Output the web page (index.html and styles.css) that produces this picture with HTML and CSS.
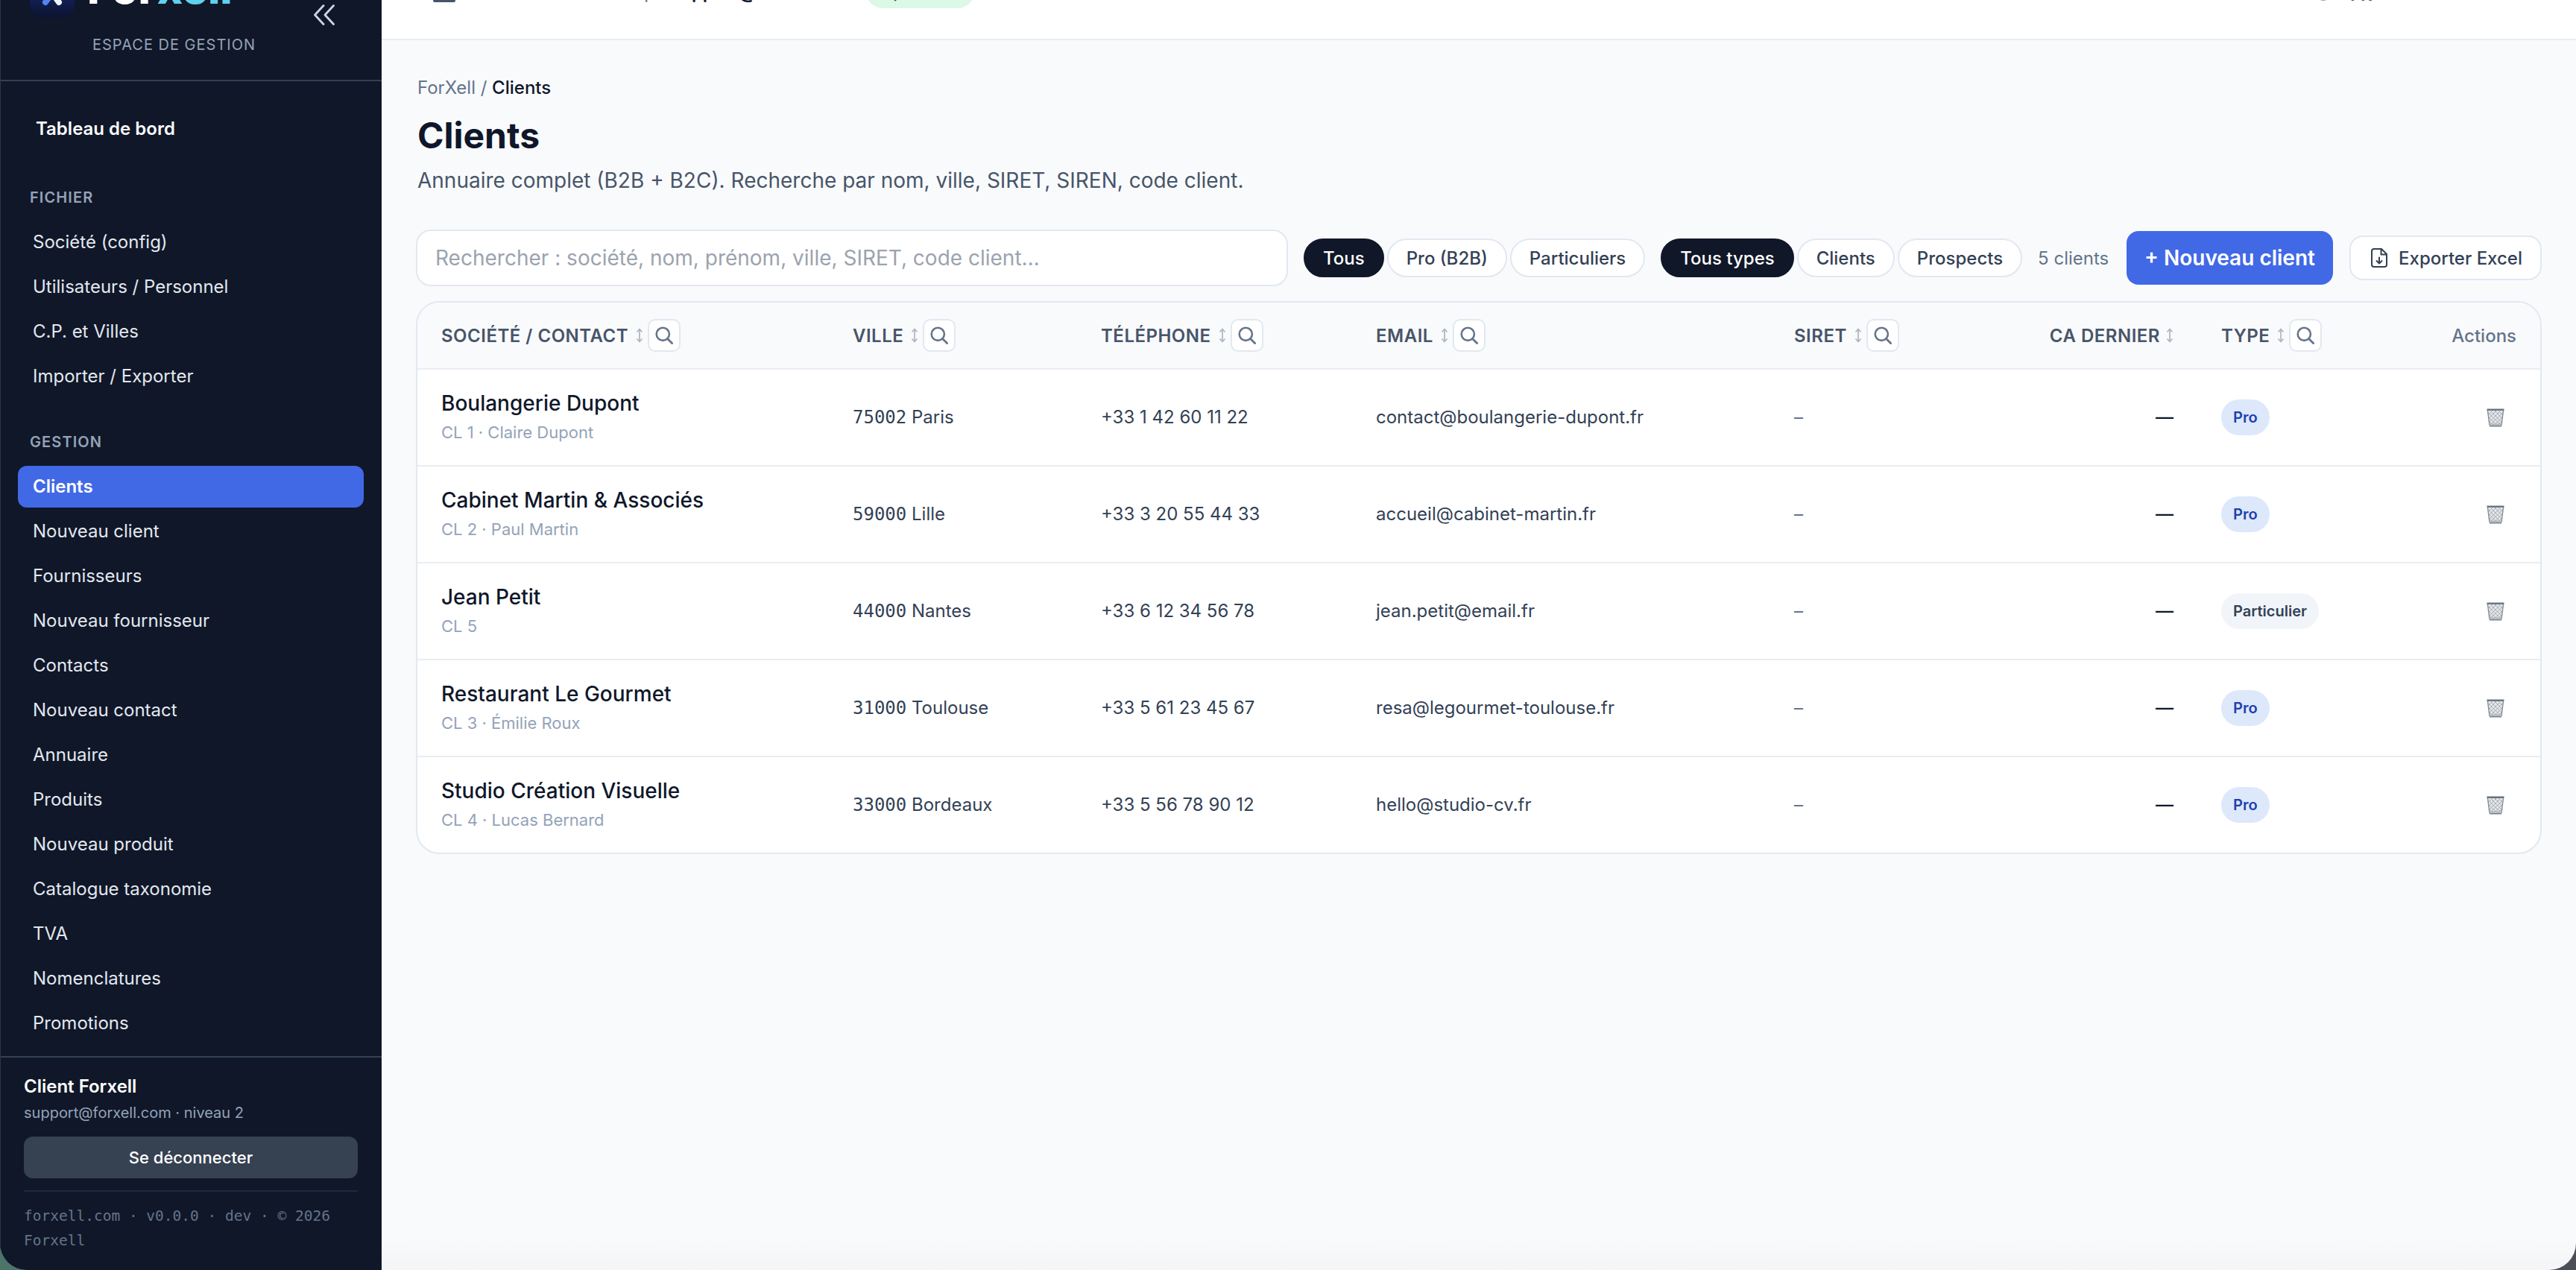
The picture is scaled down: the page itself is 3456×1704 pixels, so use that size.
FILE: index.html
```html
<!DOCTYPE html>
<html lang="fr">
  <head>
    <meta charset="UTF-8" />
    <meta name="viewport" content="width=device-width, initial-scale=1.0" />
    <title>ForXell - Clients</title>
    <link rel="stylesheet" href="styles.css">
  </head>
  <body>
    <!-- Icônes partagées -->
    <svg width="0" height="0" class="sprite">
      <symbol id="i-sort" viewBox="0 0 10 20">
        <path d="M5 2V18M1.5 5.5L5 1.5L8.5 5.5M1.5 14.5L5 18.5L8.5 14.5" fill="none" stroke="currentColor" stroke-width="1.8" />
      </symbol>
      <symbol id="i-search" viewBox="0 0 24 24">
        <circle cx="10.3" cy="10.3" r="8.6" fill="none" stroke="currentColor" stroke-width="2.6" />
        <path d="M16.5 16.5L22.6 22.6" stroke="currentColor" stroke-width="2.8" stroke-linecap="round" />
      </symbol>
      <symbol id="i-trash" viewBox="0 0 24 25">
        <path d="M1.5 2.5L4 23H20L22.5 2.5Z" fill="#e3e7ea" />
        <path d="M3 8L8 3M3.5 13L13 3M4 18L18 4M5 22L21.5 6M10 22.5L21 12M15 23L20.5 17M21 8L16 3M20.5 13L11 3M20 18L6 4M19 22L2.5 6M14 22.5L3 12M9 23L3.5 17" stroke="#a0a6ac" stroke-width="0.9" />
        <path d="M1.5 3L4 23M22.5 3L20 23" stroke="#858c94" stroke-width="1.4" />
        <path d="M0.5 1.7H23.5" stroke="#68717a" stroke-width="2.4" />
        <path d="M4 21.5H20" stroke="#a9b5c3" stroke-width="2" />
        <path d="M4 23.7H20" stroke="#747c85" stroke-width="1.5" />
      </symbol>
    </svg>

    <div class="app">
      <aside class="sidebar">
        <div class="brand">
          <div class="brand-row">
            <svg class="brand-logo" viewBox="0 0 60 60">
              <defs>
                <linearGradient id="tile" x1="0" y1="0" x2="0" y2="1">
                  <stop offset="0" stop-color="#1b3a8a" />
                  <stop offset="0.7" stop-color="#0f1b48" />
                  <stop offset="1" stop-color="#0d1430" />
                </linearGradient>
              </defs>
              <rect width="60" height="60" rx="16" fill="url(#tile)" />
              <path d="M39 14L21 39" stroke="#4f86f2" stroke-width="8" stroke-linecap="round" />
              <path d="M21 14L39 39" stroke="#eef3fd" stroke-width="8" stroke-linecap="round" />
            </svg>
            <span class="brand-name">For<b>xell</b></span>
            <svg class="collapse" viewBox="0 0 28 28">
              <path d="M13 1.5L1.5 14L13 26.5M26.5 1.5L15 14L26.5 26.5" fill="none" stroke="currentColor" stroke-width="2.8" stroke-linecap="round" stroke-linejoin="round" />
            </svg>
          </div>
          <div class="brand-sub">ESPACE DE GESTION</div>
        </div>

        <nav class="nav">
          <a class="nav-home">Tableau de bord</a>
          <div class="nav-title">FICHIER</div>
          <a class="nav-link">Société (config)</a>
          <a class="nav-link">Utilisateurs / Personnel</a>
          <a class="nav-link">C.P. et Villes</a>
          <a class="nav-link">Importer / Exporter</a>
          <div class="nav-title">GESTION</div>
          <a class="nav-link active">Clients</a>
          <a class="nav-link">Nouveau client</a>
          <a class="nav-link">Fournisseurs</a>
          <a class="nav-link">Nouveau fournisseur</a>
          <a class="nav-link">Contacts</a>
          <a class="nav-link">Nouveau contact</a>
          <a class="nav-link">Annuaire</a>
          <a class="nav-link">Produits</a>
          <a class="nav-link">Nouveau produit</a>
          <a class="nav-link">Catalogue taxonomie</a>
          <a class="nav-link">TVA</a>
          <a class="nav-link">Nomenclatures</a>
          <a class="nav-link">Promotions</a>
        </nav>

        <div class="side-footer">
          <div class="user-name">Client Forxell</div>
          <div class="user-mail">support@forxell.com · niveau 2</div>
          <button class="logout">Se déconnecter</button>
          <div class="version">forxell.com · v0.0.0 · dev · © 2026 Forxell</div>
        </div>
      </aside>

      <main class="main">
        <header class="topbar">
          <svg class="burger" viewBox="0 0 30 28">
            <path d="M2 2H28M2 14H28M2 26H28" stroke="currentColor" stroke-width="4" stroke-linecap="round" />
          </svg>
          <span class="top-label">Groupe</span>
          <span class="top-mail">support@forxell.com</span>
          <span class="top-badge">Opérateur</span>
          <div class="top-right">
            <svg class="globe" viewBox="0 0 24 24">
              <circle cx="12" cy="12" r="10.5" fill="none" stroke="currentColor" stroke-width="2.5" />
            </svg>
            <span class="lang">FR</span>
            <span class="top-hint">Forxell</span>
          </div>
        </header>

        <section class="content">
          <div class="breadcrumb">ForXell / <span>Clients</span></div>
          <h1>Clients</h1>
          <p class="subtitle">Annuaire complet (B2B + B2C). Recherche par nom, ville, SIRET, SIREN, code client.</p>

          <div class="toolbar">
            <input class="search" type="text" placeholder="Rechercher : société, nom, prénom, ville, SIRET, code client…" />
            <div class="chips">
              <button class="chip on">Tous</button>
              <button class="chip">Pro (B2B)</button>
              <button class="chip">Particuliers</button>
            </div>
            <div class="chips">
              <button class="chip on">Tous types</button>
              <button class="chip">Clients</button>
              <button class="chip">Prospects</button>
            </div>
            <span class="count">5 clients</span>
            <button class="btn-new">+ Nouveau client</button>
            <button class="btn-export">
              <svg viewBox="0 0 22 26">
                <path d="M14 1H4Q1 1 1 4V22Q1 25 4 25H18Q21 25 21 22V8ZM13.5 1V8.5H21M11 12.5V20M7.5 17L11 20.5L14.5 17" fill="none" stroke="currentColor" stroke-width="2" stroke-linejoin="round" stroke-linecap="round" />
              </svg>
              Exporter Excel
            </button>
          </div>

          <div class="card">
            <table>
              <colgroup>
                <col class="c-name" /><col class="c-city" /><col class="c-tel" /><col class="c-mail" />
                <col class="c-siret" /><col class="c-ca" /><col class="c-type" /><col class="c-act" />
              </colgroup>
              <thead>
                <tr>
                  <th><div class="th">SOCIÉTÉ / CONTACT<svg class="sort"><use href="#i-sort" /></svg><button class="find"><svg><use href="#i-search" /></svg></button></div></th>
                  <th><div class="th">VILLE<svg class="sort"><use href="#i-sort" /></svg><button class="find"><svg><use href="#i-search" /></svg></button></div></th>
                  <th><div class="th">TÉLÉPHONE<svg class="sort"><use href="#i-sort" /></svg><button class="find"><svg><use href="#i-search" /></svg></button></div></th>
                  <th><div class="th">EMAIL<svg class="sort"><use href="#i-sort" /></svg><button class="find"><svg><use href="#i-search" /></svg></button></div></th>
                  <th><div class="th">SIRET<svg class="sort"><use href="#i-sort" /></svg><button class="find"><svg><use href="#i-search" /></svg></button></div></th>
                  <th><div class="th th-right">CA DERNIER<svg class="sort"><use href="#i-sort" /></svg></div></th>
                  <th><div class="th">TYPE<svg class="sort"><use href="#i-sort" /></svg><button class="find"><svg><use href="#i-search" /></svg></button></div></th>
                  <th class="th-actions">Actions</th>
                </tr>
              </thead>
              <tbody>
                <tr>
                  <td><div class="name">Boulangerie Dupont</div><div class="sub">CL 1 · Claire Dupont</div></td>
                  <td><span class="cp">75002</span> Paris</td>
                  <td>+33 1 42 60 11 22</td>
                  <td>contact@boulangerie-dupont.fr</td>
                  <td class="siret">–</td>
                  <td class="ca">—</td>
                  <td class="type"><span class="tag pro">Pro</span></td>
                  <td class="act"><svg class="trash"><use href="#i-trash" /></svg></td>
                </tr>
                <tr>
                  <td><div class="name">Cabinet Martin &amp; Associés</div><div class="sub">CL 2 · Paul Martin</div></td>
                  <td><span class="cp">59000</span> Lille</td>
                  <td>+33 3 20 55 44 33</td>
                  <td>accueil@cabinet-martin.fr</td>
                  <td class="siret">–</td>
                  <td class="ca">—</td>
                  <td class="type"><span class="tag pro">Pro</span></td>
                  <td class="act"><svg class="trash"><use href="#i-trash" /></svg></td>
                </tr>
                <tr>
                  <td><div class="name">Jean Petit</div><div class="sub">CL 5</div></td>
                  <td><span class="cp">44000</span> Nantes</td>
                  <td>+33 6 12 34 56 78</td>
                  <td>jean.petit@email.fr</td>
                  <td class="siret">–</td>
                  <td class="ca">—</td>
                  <td class="type"><span class="tag">Particulier</span></td>
                  <td class="act"><svg class="trash"><use href="#i-trash" /></svg></td>
                </tr>
                <tr>
                  <td><div class="name">Restaurant Le Gourmet</div><div class="sub">CL 3 · Émilie Roux</div></td>
                  <td><span class="cp">31000</span> Toulouse</td>
                  <td>+33 5 61 23 45 67</td>
                  <td>resa@legourmet-toulouse.fr</td>
                  <td class="siret">–</td>
                  <td class="ca">—</td>
                  <td class="type"><span class="tag pro">Pro</span></td>
                  <td class="act"><svg class="trash"><use href="#i-trash" /></svg></td>
                </tr>
                <tr>
                  <td><div class="name">Studio Création Visuelle</div><div class="sub">CL 4 · Lucas Bernard</div></td>
                  <td><span class="cp">33000</span> Bordeaux</td>
                  <td>+33 5 56 78 90 12</td>
                  <td>hello@studio-cv.fr</td>
                  <td class="siret">–</td>
                  <td class="ca">—</td>
                  <td class="type"><span class="tag pro">Pro</span></td>
                  <td class="act"><svg class="trash"><use href="#i-trash" /></svg></td>
                </tr>
              </tbody>
            </table>
          </div>
        </section>
      </main>
    </div>
  </body>
</html>
```
FILE: styles.css
```css
* {
  box-sizing: border-box;
}

body {
  margin: 0;
  height: 1704px;
  overflow: hidden;
  background: linear-gradient(90deg, #4d7468 0%, #5a5f5f 50%, #4b4f55 100%);
  font-family: Inter, "Liberation Sans", sans-serif;
  font-size: 24px;
  color: #334155;
}

button,
input {
  font-family: inherit;
  margin: 0;
}

.sprite {
  display: block;
}

.app {
  display: flex;
  width: 3456px;
  height: 1704px;
  overflow: hidden;
  border-radius: 0 0 36px 36px;
}

/* Barre latérale */
.sidebar {
  width: 512px;
  flex: none;
  display: flex;
  flex-direction: column;
  background: #101728;
  border-left: 1px solid #30363f;
  color: #e2e8f0;
}

.brand {
  height: 109px;
  flex: none;
  display: flex;
  flex-direction: column;
  justify-content: flex-end;
  padding-bottom: 32px;
  border-bottom: 2px solid #334155;
}

.brand-row {
  display: flex;
  align-items: center;
  padding-left: 39px;
  height: 60px;
  flex: none;
}

.brand-logo {
  width: 60px;
  height: 60px;
}

.brand-name {
  width: 300px;
  margin-bottom: 20px;
  padding-left: 17px;
  font-size: 58px;
  line-height: 60px;
  font-weight: 800;
  color: #fff;
}

.brand-name b {
  font-weight: 800;
  color: #5fd0ee;
}

.collapse {
  width: 28px;
  height: 28px;
  margin: 52px 0 0 21px;
  color: #cbd5e1;
}

.brand-sub {
  margin-top: 21px;
  padding-left: 123px;
  font-size: 20px;
  line-height: 30px;
  letter-spacing: 1px;
  color: #94a3b8;
}

.nav {
  flex: 1;
  min-height: 0;
  overflow: hidden;
  padding: 36px 24px 0 23px;
}

.nav-home {
  display: block;
  padding: 0 24px;
  font-size: 24px;
  line-height: 56px;
  font-weight: 600;
  color: #f8fafc;
}

.nav-title {
  margin: 48px 0 16px;
  padding: 0 16px;
  font-size: 20px;
  line-height: 32px;
  font-weight: 600;
  letter-spacing: 1.1px;
  color: #94a3b8;
}

.nav-link + .nav-title {
  margin-top: 44px;
}

.nav-link {
  display: block;
  height: 56px;
  margin-bottom: 4px;
  padding: 0 20px;
  border-radius: 12px;
  line-height: 56px;
  color: #e2e8f0;
}

.nav-link.active {
  background: #4169e6;
  color: #fff;
  font-weight: 600;
}

.side-footer {
  flex: none;
  height: 287px;
  padding: 23px 32px 0 31px;
  border-top: 2px solid #334155;
}

.user-name {
  line-height: 32px;
  font-weight: 600;
  color: #fff;
}

.user-mail {
  margin-top: 4px;
  font-size: 20px;
  line-height: 30px;
  color: #94a3b8;
}

.logout {
  display: block;
  width: 100%;
  height: 56px;
  margin-top: 17px;
  border: 0;
  border-radius: 12px;
  background: #364152;
  color: #fff;
  font-size: 22px;
  font-weight: 500;
}

.version {
  margin-top: 16px;
  padding-top: 16px;
  border-top: 2px solid #1e293b;
  font-family: "DejaVu Sans Mono", monospace;
  font-size: 19.5px;
  line-height: 33px;
  color: #64748b;
}

/* Zone principale */
.main {
  flex: 1;
  min-width: 0;
  background: linear-gradient(#f9fafc 1660px, #f4f5f7 1704px);
}

/* Barre du haut, en partie défilée hors de l'écran */
.topbar {
  height: 128px;
  margin-top: -74px;
  display: flex;
  align-items: center;
  padding: 0 46px 0 69px;
  background: #fff;
  border-bottom: 2px solid #e9edf3;
}

.burger {
  width: 30px;
  height: 28px;
  color: #475569;
}

.top-label {
  margin-left: 189px;
  width: 100px;
  text-align: right;
  padding-right: 7px;
  color: #64748b;
}

.top-mail {
  width: 263px;
  font-weight: 600;
  color: #0f172a;
}

.top-badge {
  width: 145px;
  height: 44px;
  margin-left: -1px;
  border-radius: 22px;
  background: #dcf8e6;
  color: #166534;
  font-size: 22px;
  line-height: 44px;
  font-weight: 500;
  text-align: center;
}

.top-right {
  margin-left: auto;
  display: flex;
  align-items: center;
  padding-top: 6px;
}

.globe {
  width: 24px;
  height: 24px;
  margin: 0 24px 6px 0;
  color: #64748b;
}

.lang {
  width: 152px;
  font-weight: 600;
  color: #475569;
}

.top-hint {
  width: 105px;
  font-size: 22px;
  color: #dde1e6;
}

.content {
  padding: 46px 46px 0;
}

.breadcrumb {
  padding-left: 2px;
  line-height: 36px;
  color: #64748b;
}

.breadcrumb span {
  color: #0f172a;
  font-weight: 500;
}

h1 {
  margin: 16px 0 0;
  padding-left: 2px;
  font-size: 48px;
  line-height: 60px;
  font-weight: 700;
  color: #0f172a;
}

.subtitle {
  margin: 10px 0 0;
  padding-left: 2px;
  font-size: 28px;
  line-height: 40px;
  color: #475569;
}

.toolbar {
  display: flex;
  align-items: center;
  height: 76px;
  margin: 46px 0 20px;
}

.search {
  width: 1170px;
  height: 76px;
  padding: 0 24px;
  border: 2px solid #e2e8f0;
  border-radius: 20px;
  background: #fff;
  font-size: 28px;
}

.search::placeholder {
  color: #9ca3af;
}

.chips {
  display: flex;
  gap: 4px;
  margin-left: 21px;
}

.chip {
  height: 52px;
  padding: 0 24px;
  border: 2px solid #e2e8f0;
  border-radius: 26px;
  background: #fff;
  color: #334155;
  font-size: 24px;
  font-weight: 500;
}

.chip.on {
  border-color: #101728;
  background: #101728;
  color: #fff;
}

.count {
  margin-left: 21px;
  color: #64748b;
}

.btn-new {
  height: 72px;
  width: 277px;
  margin-left: auto;
  padding: 0;
  border: 0;
  border-radius: 16px;
  background: #4169e6;
  color: #fff;
  font-size: 28px;
  font-weight: 600;
}

.btn-export {
  display: flex;
  align-items: center;
  justify-content: center;
  gap: 15px;
  width: 258px;
  height: 60px;
  margin-left: 22px;
  padding: 0 0 0 3px;
  border: 2px solid #e2e8f0;
  border-radius: 18px;
  background: #fff;
  color: #334155;
  font-size: 24px;
  font-weight: 500;
}

.btn-export svg {
  width: 22px;
  height: 26px;
}

/* Tableau des clients */
.card {
  border: 2px solid #e2e8f0;
  border-radius: 32px;
  background: #fff;
  overflow: hidden;
}

table {
  width: 100%;
  table-layout: fixed;
  border-collapse: separate;
  border-spacing: 0;
}

.c-name { width: 552px; }
.c-city { width: 333px; }
.c-tel { width: 369px; }
.c-mail { width: 561px; }
.c-siret { width: 300px; }
.c-ca { width: 273px; }
.c-type { width: 260px; }

th,
td {
  padding: 0 32px 2px;
  text-align: left;
  border-bottom: 2px solid #e9edf3;
}

th {
  height: 90px;
  padding-bottom: 0;
  background: #f9fafc;
  font-weight: 600;
  color: #475569;
}

.th {
  display: flex;
  align-items: center;
  letter-spacing: 0.5px;
  white-space: nowrap;
}

.th-right {
  justify-content: flex-end;
}

.sort {
  width: 10px;
  height: 20px;
  margin: 0 6px 0 10px;
  color: #b0b7c2;
}

.th-right .sort {
  margin: 0 0 0 8px;
}

.find {
  display: flex;
  align-items: center;
  justify-content: center;
  width: 44px;
  height: 44px;
  padding: 0;
  border: 2px solid #e2e8f0;
  border-radius: 10px;
  background: #fff;
  color: #64748b;
}

.find svg {
  width: 24px;
  height: 24px;
}

.th-actions {
  text-align: right;
  font-weight: 500;
  color: #64748b;
}

td {
  height: 130px;
}

tbody tr:last-child td {
  height: 128px;
  border-bottom: 0;
}

.name {
  font-size: 28px;
  line-height: 42px;
  font-weight: 500;
  color: #0f172a;
}

.sub {
  font-size: 22px;
  line-height: 34px;
  margin: 1px 0 2px;
  color: #94a3b8;
}

.cp {
  font-family: "DejaVu Sans Mono", monospace;
  line-height: 1;
}

.siret {
  color: #64748b;
}

.ca {
  text-align: right;
  font-weight: 500;
  color: #0f172a;
}

.type {
  padding-bottom: 0;
}

.tag {
  display: inline-block;
  height: 48px;
  padding: 0 16px;
  border-radius: 24px;
  background: #f1f5f9;
  font-size: 20px;
  line-height: 48px;
  font-weight: 600;
  color: #334155;
  vertical-align: middle;
}

.tag.pro {
  background: #dde8fb;
  color: #1e40af;
}

.act {
  text-align: right;
}

.trash {
  width: 24px;
  height: 25px;
  margin-right: 16px;
  vertical-align: middle;
}
```
